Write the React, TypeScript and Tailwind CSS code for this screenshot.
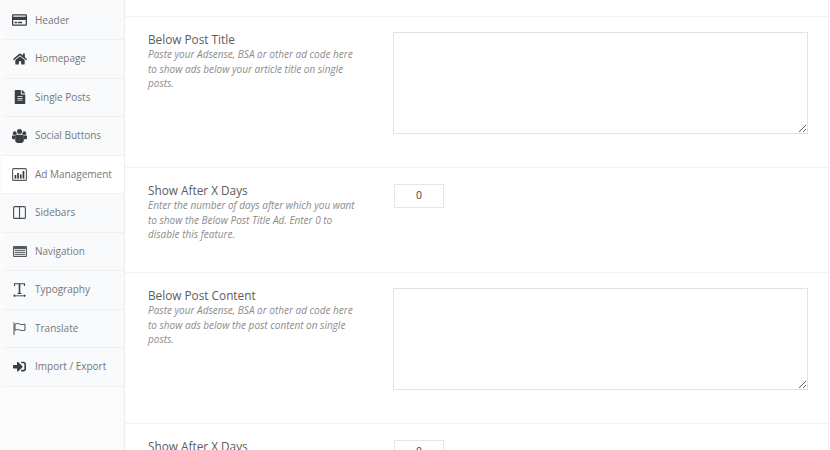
import React from "react";
import { FaHome, FaFileAlt, FaRegCreditCard, FaSignInAlt } from "react-icons/fa";

const C = "#3a3e42";

const Chart = () => (
  <svg width="15" height="13" viewBox="0 0 15 13" fill="none">
    <rect x="0.6" y="0.6" width="13.8" height="11.8" rx="1" stroke="#55595d" strokeWidth="1.1" />
    <rect x="2.6" y="7" width="1.7" height="3.6" fill={C} />
    <rect x="5.2" y="5" width="1.7" height="5.6" fill={C} />
    <rect x="7.9" y="6.4" width="1.7" height="4.2" fill={C} />
    <rect x="10.6" y="3" width="1.7" height="7.6" fill={C} />
  </svg>
);
const Users = () => (
  <svg width="15" height="14" viewBox="0 0 15 14" fill={C}>
    <circle cx="2.7" cy="4.2" r="1.9" />
    <circle cx="12.3" cy="4.2" r="1.9" />
    <circle cx="7.5" cy="2.6" r="2.5" />
    <path d="M0 6.6h3.6L3 10.2H0.9L0 9.4z" />
    <path d="M15 6.6h-3.6l.6 3.6h2.1l.9-.8z" />
    <path d="M4.6 5.8h5.8c.9 0 1.4.7 1.4 1.6v4.8L10 14H5L3.2 12.2V7.4c0-.9.5-1.6 1.4-1.6z" />
  </svg>
);
const Columns = () => (
  <svg width="13" height="13" viewBox="0 0 13 13" fill="none" stroke="#4a4e52" strokeWidth="1.1">
    <rect x="0.6" y="0.6" width="11.8" height="11.8" rx="1" />
    <path d="M6.5 0.6v11.8" />
  </svg>
);
const ListIcon = () => (
  <svg width="14" height="11" viewBox="0 0 14 11">
    <rect width="14" height="11" rx="1" fill="#55595d" />
    <rect x="1" y="3" width="12" height="7" fill="#d9dbdd" />
    <path d="M2 4.5h10M2 6.5h10M2 8.5h10" stroke="#6a6e72" strokeWidth="1" />
  </svg>
);
const TypeIcon = () => (
  <svg width="13" height="14" viewBox="0 0 13 14" fill="none" stroke="#3f4347">
    <path d="M1.5 3V0.8h10V3" strokeWidth="1.1" />
    <path d="M6.5 0.8v9.6" strokeWidth="1.6" />
    <path d="M4.5 10.5h4" strokeWidth="1" />
    <path d="M1 12.8h11" strokeWidth="0.9" />
    <path d="M0.3 12.8l1.6-1.2v2.4zM12.7 12.8l-1.6-1.2v2.4z" fill="#3f4347" strokeWidth="0.4" />
  </svg>
);
const Flag = () => (
  <svg width="14" height="13" viewBox="0 0 14 13" fill="none" stroke="#4a4e52">
    <path d="M1 0.3V13" strokeWidth="1" />
    <path d="M2 2.3c1.500-1 3-1 4.500-.3s3 .8 5.500.2v6c-2.500.6-4 .4-5.500-.2s-3-.6-4.500.3z" strokeWidth="1" />
  </svg>
);

const nav: [string, React.ReactNode][] = [
  ["Header", <FaRegCreditCard size={16} />],
  ["Homepage", <FaHome size={14} />],
  ["Single Posts", <FaFileAlt size={14} />],
  ["Social Buttons", <Users />],
  ["Ad Management", <Chart />],
  ["Sidebars", <Columns />],
  ["Navigation", <ListIcon />],
  ["Typography", <TypeIcon />],
  ["Translate", <Flag />],
  ["Import / Export", <FaSignInAlt size={13} />],
];

const Head = ({ title, desc }: { title: string; desc: React.ReactNode }) => (
  <div className="w-[245px] shrink-0">
    <div className="text-[11.8px] leading-[14px] text-[#5c5c5c]">{title}</div>
    <div className="mt-[1px] text-[10px] leading-[14.7px] italic text-[#8c8c8c]">{desc}</div>
  </div>
);

const Section = ({ title, desc, h, children }: { title: string; desc: React.ReactNode; h: string; children: React.ReactNode }) => (
  <div className={`flex border-b border-[#f2f2f2] pl-[23px] pt-[15px] ${h}`}>
    <Head title={title} desc={desc} />
    {children}
  </div>
);

const Area = () => (
  <textarea readOnly className="h-[102px] w-[415px] border border-[#e3e3e3] bg-white outline-none" />
);

const Num = () => (
  <div className="mt-[1px] flex h-[24px] w-[50px] items-center justify-center border border-[#e6e6e6] text-[10.5px] text-[#444]">0</div>
);

export default function App() {
  return (
    <div className="flex h-[450px] w-[830px] overflow-hidden bg-white font-['Open_Sans',sans-serif]">
      <aside className="h-full w-[125px] shrink-0 border-r border-[#ededed] bg-[#fbfbfb] pl-[2px]">
        <div className="mt-[1.5px]">
          {nav.map(([label, icon]) => (
            <div key={label} className={`flex h-[38.5px] items-center border-b border-[#f0f0f0] pl-[10px] text-[#777] ${label === "Ad Management" ? "bg-white" : "bg-[#f9fafb]"}`}>
              <span className="flex w-[15px] justify-center text-[#3a3e42]">{icon}</span>
              <span className="ml-[8px] text-[10px]">{label}</span>
            </div>
          ))}
        </div>
      </aside>
      <main className="w-[704px] shrink-0 border-r border-[#f0f0f0]">
        <div className="h-[17px] border-b border-[#f2f2f2]" />
        <Section title="Below Post Title" h="h-[151px]" desc={<>Paste your Adsense, BSA or other ad code here<br />to show ads below your article title on single<br />posts.</>}>
          <Area />
        </Section>
        <Section title="Show After X Days" h="h-[105px]" desc={<>Enter the number of days after which you want<br />to show the Below Post Title Ad. Enter 0 to<br />disable this feature.</>}>
          <div className="pl-[1px]"><Num /></div>
        </Section>
        <Section title="Below Post Content" h="h-[151px]" desc={<>Paste your Adsense, BSA or other ad code here<br />to show ads below the post content on single<br />posts.</>}>
          <Area />
        </Section>
        <Section title="Show After X Days" h="h-[105px]" desc={<>Enter the number of days after which you want</>}>
          <div className="pl-[1px]"><Num /></div>
        </Section>
      </main>
    </div>
  );
}
